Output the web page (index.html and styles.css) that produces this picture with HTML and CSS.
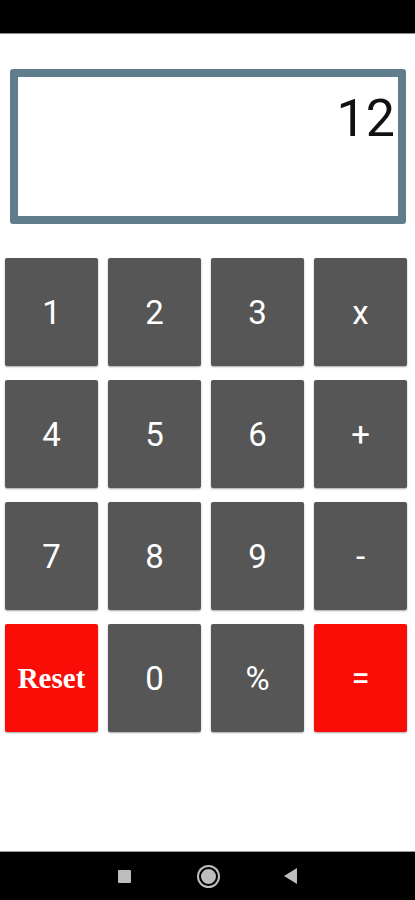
FILE: index.html
```html
<!DOCTYPE html>
<html>
<head>
  <title>Calculadora</title>
  <link rel="stylesheet" href="styles.css">
</head>
<body>
  <div class="phone">
    <div class="status-bar"></div>

    <main class="app">
      <div class="display"><span id="visor">12</span></div>

      <div class="keypad">
        <button class="key">1</button>
        <button class="key">2</button>
        <button class="key">3</button>
        <button class="key">x</button>
        <button class="key">4</button>
        <button class="key">5</button>
        <button class="key">6</button>
        <button class="key">+</button>
        <button class="key">7</button>
        <button class="key">8</button>
        <button class="key">9</button>
        <button class="key">-</button>
        <button class="key red reset">Reset</button>
        <button class="key">0</button>
        <button class="key">%</button>
        <button class="key red">=</button>
      </div>
    </main>

    <nav class="nav-bar">
      <span class="nav-square"></span>
      <span class="nav-circle"></span>
      <svg class="nav-back" width="14" height="16" viewBox="0 0 14 16">
        <polygon points="13,0 13,16 0,8" fill="#bdbdbd"/>
      </svg>
    </nav>
  </div>
</body>
</html>
```

FILE: styles.css
```css
body {
  margin: 0;
  font-family: Roboto, 'Noto Sans', sans-serif;
  background: #fff;
}
.phone {
  width: 415px;
  height: 900px;
  display: flex;
  flex-direction: column;
  overflow: hidden;
}
.status-bar {
  height: 33px;
  background: #000;
  border-bottom: 1px solid #8a8a8a;
  flex: none;
}
.app {
  flex: 1;
  padding: 35px 0 0 0;
}
.display {
  margin: 0 9px 0 10px;
  height: 155px;
  border: 8px solid #607d8b;
  border-radius: 3px;
  text-align: right;
  padding: 16px 3px 0 0;
  box-sizing: border-box;
}
#visor {
  font-size: 52px;
  line-height: 52px;
  color: #111;
}
.keypad {
  margin-top: 34px;
  padding-left: 5px;
  display: grid;
  grid-template-columns: repeat(4, 93px);
  grid-auto-rows: 108px;
  column-gap: 10px;
  row-gap: 14px;
}
.key {
  border: none;
  border-radius: 2px;
  background: #565656;
  color: #fff;
  font-family: Roboto, sans-serif;
  font-size: 33px;
  box-shadow: 0 1px 2px rgba(0,0,0,0.35);
  padding: 0;
}
.red {
  background: #fa0d07;
}
.reset {
  font-family: 'Liberation Serif', serif;
  font-weight: bold;
  font-size: 29px;
}
.nav-bar {
  height: 48px;
  background: #000;
  border-top: 1px solid #9a9a9a;
  flex: none;
  display: flex;
  align-items: center;
  justify-content: center;
  gap: 0;
}
.nav-square {
  width: 13px;
  height: 13px;
  background: #bdbdbd;
  border-radius: 1px;
  margin-right: 68px;
}
.nav-circle {
  width: 15px;
  height: 15px;
  border-radius: 50%;
  background: #bdbdbd;
  border: 2px solid #000;
  box-shadow: 0 0 0 2px #bdbdbd;
  margin-right: 66px;
}
.nav-back {
  display: block;
}
```
